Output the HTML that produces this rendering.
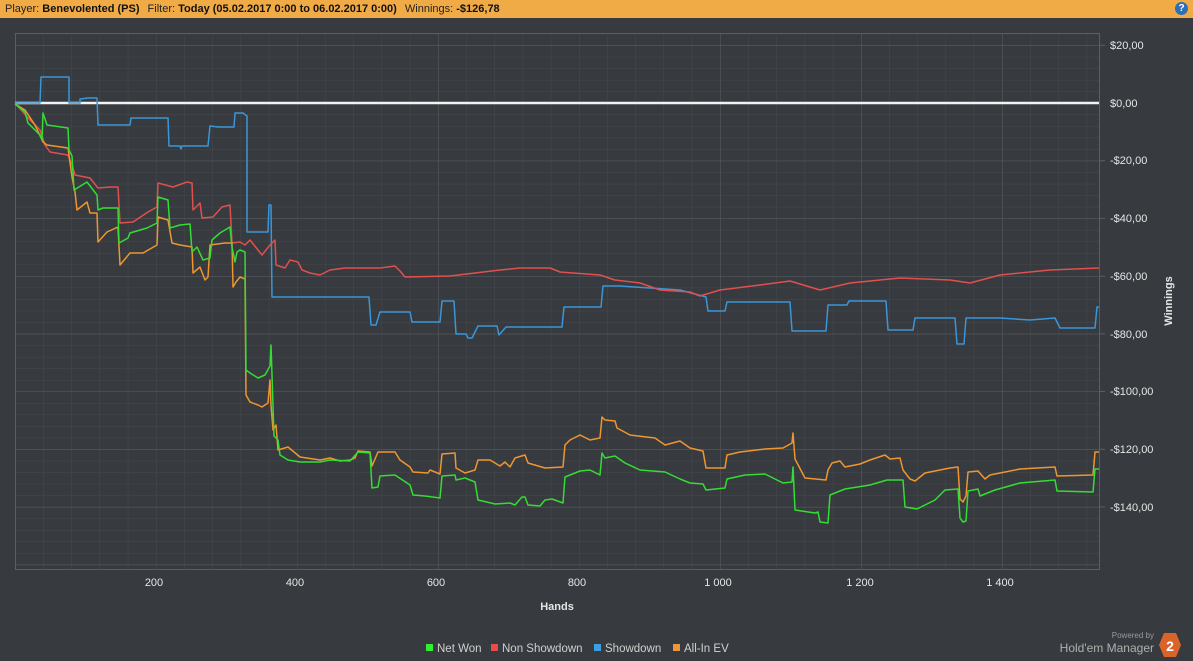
<!DOCTYPE html>
<html><head><meta charset="utf-8"><style>
html,body{margin:0;padding:0;width:1193px;height:661px;background:#373a3e;overflow:hidden;font-family:"Liberation Sans","DejaVu Sans",sans-serif}
.hdr{position:absolute;left:0;top:0;width:1193px;height:18px;background:#f0ab47;font-size:11px;line-height:18px;color:#222;white-space:nowrap}
.hdr span{margin-left:5px}.hdr b{font-weight:bold;color:#111}
.help{position:absolute;right:5px;top:2px;width:13px;height:13px;border-radius:50%;background:#2f6fb8;color:#fff;font-size:10px;font-weight:bold;text-align:center;line-height:13px}
</style></head><body>
<div class="hdr"><span>Player: <b>Benevolented (PS)</b></span> <span>Filter: <b>Today (05.02.2017 0:00 to 06.02.2017 0:00)</b></span> <span>Winnings: <b>-$126,78</b></span></div>
<div class="help">?</div>
<svg width="1193" height="661" style="position:absolute;left:0;top:0" xmlns="http://www.w3.org/2000/svg">
<defs>
<pattern id="mn" patternUnits="userSpaceOnUse" x="15" y="103" width="28.2" height="11.54"><path d="M0 0V11.54M0 0H28.2" stroke="#46494d" stroke-width="1" fill="none"/></pattern>
<pattern id="mj" patternUnits="userSpaceOnUse" x="15" y="103" width="141" height="57.7"><path d="M0 0V57.7M0 0H141" stroke="#5b5e62" stroke-width="1" fill="none"/></pattern>
</defs>
<rect x="15" y="33" width="1084" height="536" fill="url(#mn)"/>
<rect x="15" y="33" width="1084" height="536" fill="url(#mj)"/>
<rect x="15.5" y="33.5" width="1084" height="536" fill="none" stroke="#5b5e62"/>
<g stroke="#5b5e62"><path d="M1099 45.3h6M1099 160.7h6M1099 218.4h6M1099 276.1h6M1099 333.8h6M1099 391.5h6M1099 449.2h6M1099 506.9h6"/></g>
<g font-size="11" fill="#e6e6e6">
<text x="1110" y="49">$20,00</text><text x="1110" y="107">$0,00</text><text x="1110" y="164">-$20,00</text><text x="1110" y="222">-$40,00</text><text x="1110" y="280">-$60,00</text><text x="1110" y="338">-$80,00</text><text x="1110" y="395">-$100,00</text><text x="1110" y="453">-$120,00</text><text x="1110" y="511">-$140,00</text>
<g text-anchor="middle"><text x="154" y="586">200</text><text x="295" y="586">400</text><text x="436" y="586">600</text><text x="577" y="586">800</text><text x="718" y="586">1 000</text><text x="860" y="586">1 200</text><text x="1000" y="586">1 400</text></g>
<text x="557" y="610" font-weight="bold" text-anchor="middle">Hands</text>
<text x="1172" y="301" font-weight="bold" text-anchor="middle" transform="rotate(-90 1172 301)">Winnings</text>
</g>
<line x1="15" y1="103" x2="1099" y2="103" stroke="#f2f2f2" stroke-width="2.5"/>
<g fill="none" stroke-width="1.5" stroke-linejoin="round">
<polyline stroke="#3a96d8" points="15,103 40,103 41,77 69,77 69,103 80,103 80,99 88,98 97,98 98,125 130,125 131,118 168,118 169,146 180,146 181,149 182,146 208,146 210,126 218,127 234,127 235,113 243,113 247,116 247,232 268,232 269,205 271,205 272,297 369,297 371,325 376,325 380,312 410,312 412,322 440,322 442,301 454,301 456,334 466,334 468,338 472,338 478,326 497,326 499,335 506,327 562,327 564,307 601,307 603,286 620,286 650,288 680,290 706,297 708,311 725,311 727,302 790,302 792,331 826,331 828,305 847,305 849,301 886,301 888,330 913,330 915,318 955,318 957,344 964,344 966,318 1000,318 1030,320 1055,318 1060,328 1095,328 1097,307 1099,307"/>
<polyline stroke="#e0504e" points="15,103 30,120 40,130 45,145 50,152 68,155 72,165 75,175 90,178 98,188 110,187 118,187 120,223 133,222 148,212 157,207 158,183 173,187 187,182 192,183 193,210 200,203 202,218 213,217 222,207 230,205 232,243 240,242 245,245 250,240 262,255 270,245 275,240 276,265 285,268 290,260 298,262 302,270 310,273 320,275 330,270 345,268 380,268 395,266 400,271 405,277 450,276 500,270 520,268 550,268 560,272 600,275 615,280 640,283 660,290 690,292 700,296 720,290 760,285 790,281 820,290 850,283 900,278 950,280 970,283 1000,275 1050,270 1099,268"/>
<polyline stroke="#ee962f" points="15,104 25,110 35,125 43,142 47,145 68,148 72,177 75,192 77,210 87,202 90,213 97,213 98,242 107,232 118,227 120,265 130,253 143,253 157,245 158,217 168,220 172,243 180,245 192,247 193,273 200,267 205,280 208,277 210,245 225,243 232,243 233,287 236,282 240,277 245,279 246,395 250,402 258,405 262,407 268,403 270,380 271,405 273,430 276,425 278,450 288,447 300,457 320,460 330,458 340,461 350,460 355,458 358,451 370,452 372,466 378,452 395,452 400,460 410,467 413,472 428,473 430,470 440,474 442,454 455,453 456,468 465,473 475,470 478,460 490,460 500,466 505,462 510,467 515,458 525,455 528,463 545,468 563,467 565,445 570,440 580,435 590,440 600,438 602,417 605,420 615,421 617,428 630,435 655,438 665,445 680,441 690,448 703,451 706,468 725,468 727,455 740,452 765,449 783,448 792,443 793,433 795,459 805,478 826,480 828,470 832,463 840,461 845,467 860,464 870,460 885,455 890,459 900,458 903,470 910,479 915,481 925,473 950,468 958,467 960,499 963,502 966,496 968,472 978,471 985,479 990,475 1020,469 1055,467 1057,476 1093,475 1095,452 1099,452"/>
<polyline stroke="#33dd33" points="15,104 25,112 28,123 40,135 42,140 43,113 47,125 68,128 69,150 72,156 74,190 87,182 97,195 98,210 103,208 118,208 119,243 128,238 130,233 147,228 157,223 158,197 168,200 170,228 180,225 190,224 192,252 197,247 203,260 210,258 212,240 220,233 230,227 232,247 235,262 237,252 240,250 245,252 246,370 250,373 258,378 265,375 270,366 271,345 272,375 274,436 278,440 280,455 288,460 300,462 320,462 330,460 350,461 358,452 370,453 372,488 378,487 380,476 395,475 410,485 413,495 425,496 440,498 442,476 455,475 456,480 465,478 475,482 478,500 495,504 510,503 515,505 522,497 525,497 528,505 540,506 545,500 552,499 563,503 565,477 580,471 590,470 600,475 602,453 605,458 615,456 625,463 640,470 665,472 680,479 690,483 703,484 706,490 725,488 727,479 745,475 765,474 783,483 792,482 793,467 795,510 815,513 818,512 820,522 828,523 830,495 845,489 870,485 887,480 903,480 905,507 917,509 935,500 945,490 958,489 960,518 963,522 966,521 968,491 978,489 980,496 995,490 1020,483 1055,480 1057,491 1093,492 1095,469 1099,469"/>
</g>
<g font-size="11.5" fill="#d0d0d0">
<rect x="426" y="644" width="7" height="7" fill="#33ee33"/><text x="437" y="652">Net Won</text>
<rect x="491" y="644" width="7" height="7" fill="#e84c4c"/><text x="502" y="652">Non Showdown</text>
<rect x="594" y="644" width="7" height="7" fill="#3ca0e0"/><text x="605" y="652">Showdown</text>
<rect x="673" y="644" width="7" height="7" fill="#f0963a"/><text x="684" y="652">All-In EV</text>
</g>
<text x="1154" y="638" font-size="8" fill="#9a9a9a" text-anchor="end">Powered by</text>
<text x="1154" y="652" font-size="12" fill="#b0b0b0" text-anchor="end">Hold'em Manager</text>
<polygon points="1164,633 1176,633 1181,645 1176,657 1164,657 1159,645" fill="#d9642a"/>
<text x="1170" y="651" font-size="14" font-weight="bold" fill="#fff" text-anchor="middle">2</text>
</svg>
</body></html>
